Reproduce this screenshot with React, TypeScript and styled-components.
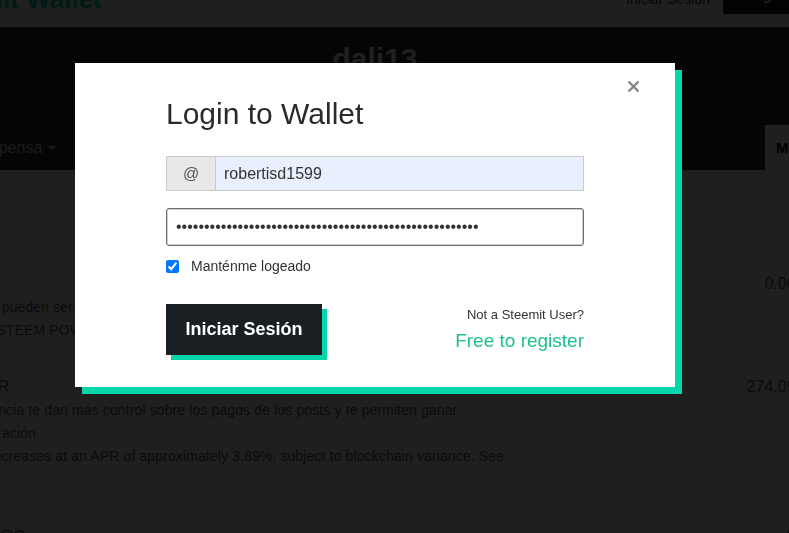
import React, { useEffect, useRef } from "react";
import styled, { createGlobalStyle } from "styled-components";

const GlobalStyle = createGlobalStyle`
  html, body { margin: 0; padding: 0; overflow: hidden; background: #fff; }
  body { font-family: "Liberation Sans", Arial, sans-serif; }
  *, *::before, *::after { box-sizing: border-box; }
`;

const Viewport = styled.div`
  width: 789px;
  height: 533px;
  overflow: hidden;
`;

/* the underlying page, scrolled 23px down and 120px right */
const Stage = styled.div`
  width: 990px;
  margin-left: -120px;
  margin-top: -23px;
  background: #fff;
`;

const Header = styled.header`
  height: 50px;
  padding: 0 26px 7px 45px;
  display: flex;
  align-items: center;
  justify-content: space-between;
  background: #fff;
`;

const Logo = styled.div`
  font-size: 26px;
  line-height: 30px;
  font-weight: 700;
  color: #06d6a9;
`;

const HeaderActions = styled.div`
  display: flex;
  align-items: center;
  gap: 13px;
`;

const HeaderLink = styled.span`
  font-size: 14px;
  color: #333;
`;

const HeaderButton = styled.span`
  display: flex;
  align-items: center;
  height: 30px;
  padding: 0 22px 7px;
  background: #1a1e22;
  color: #fff;
  font-size: 14px;
  font-weight: 700;
`;

const Hero = styled.section`
  height: 98px;
  padding-top: 14px;
  background: #2b2b2b;
  text-align: center;
`;

const UserName = styled.h2`
  margin: 0;
  font-size: 30px;
  line-height: 36px;
  font-weight: 700;
  color: #fff;
`;

const Nav = styled.nav`
  height: 45px;
  display: flex;
  align-items: stretch;
  padding-left: 68px;
  background: #2b2b2b;
`;

const NavItem = styled.span`
  display: flex;
  align-items: center;
  gap: 6px;
  font-size: 16px;
  color: #d6d6d6;
`;

const Caret = styled.span`
  width: 0;
  height: 0;
  border-left: 4px solid transparent;
  border-right: 4px solid transparent;
  border-top: 4px solid #d6d6d6;
`;

const NavTab = styled.span`
  margin-left: auto;
  width: 105px;
  display: flex;
  align-items: center;
  padding-left: 11px;
  background: #fff;
  color: #000;
  font-weight: 700;
  font-size: 15px;
`;

const Body = styled.main`
  padding: 101px 6px 0 0;
  background: #fff;
  color: #5a5a5a;
`;

const Row = styled.div<{ $divider?: boolean; $gap?: number }>`
  display: grid;
  grid-template-columns: 1fr auto;
  margin-top: ${(p) => p.$gap ?? 0}px;
  padding-bottom: ${(p) => (p.$divider ? 37 : 0)}px;
  border-bottom: ${(p) => (p.$divider ? "1px solid #e4e4e4" : "none")};
`;

const RowTitle = styled.div`
  font-size: 17.3px;
  line-height: 25px;
`;

const RowDesc = styled.div`
  font-size: 14px;
  line-height: 23px;
  letter-spacing: 0.12px;
  white-space: nowrap;
`;

const RowValue = styled.div`
  font-size: 16px;
  line-height: 25px;
  text-align: right;
`;

const Overlay = styled.div`
  position: fixed;
  inset: 0;
  background: rgba(0, 0, 0, 0.878);
  display: flex;
  align-items: flex-start;
  padding: 63px 0 0 75px;
`;

const Modal = styled.div`
  position: relative;
  width: 600px;
  padding: 34px 91px 32px;
  background: #fff;
  box-shadow: 7px 7px 0 #06d6a9;
  color: #333;
`;

const CloseButton = styled.button`
  position: absolute;
  top: 17px;
  right: 35px;
  width: 13px;
  height: 13px;
  padding: 0;
  border: none;
  background: transparent;
  display: flex;
`;

const Title = styled.h1`
  margin: 0 0 25px;
  font-size: 30px;
  line-height: 34px;
  font-weight: 400;
  color: #2a2a2a;
`;

const InputGroup = styled.div`
  display: flex;
  height: 35px;
`;

const Addon = styled.span`
  width: 49px;
  display: flex;
  align-items: center;
  justify-content: center;
  background: #e8e8e8;
  border: 1px solid #cacaca;
  border-right: none;
  font-size: 16px;
  color: #555;
`;

const TextInput = styled.input`
  flex: 1;
  min-width: 0;
  height: 100%;
  padding: 0 8px;
  border: 1px solid #cacaca;
  background: #e8f0fe;
  font: 16px "Liberation Sans", Arial, sans-serif;
  color: #333;
  outline: none;
`;

const PasswordInput = styled.input`
  display: block;
  width: 100%;
  height: 38px;
  margin-top: 17px;
  padding: 0 9px;
  border: 1px solid #6e6e6e;
  border-radius: 3px;
  box-shadow: inset 0 0 0 1px #d0d0d0;
  background: #fff;
  font: 16px "Liberation Sans", Arial, sans-serif;
  color: #333;
  outline: none;
  caret-color: #000;
`;

const CheckRow = styled.label`
  margin-top: 10px;
  height: 20px;
  display: flex;
  align-items: center;
  gap: 12px;
  font-size: 14px;
  color: #333;
`;

const Checkbox = styled.input`
  margin: 0;
  width: 13px;
  height: 13px;
`;

const Footer = styled.div`
  margin-top: 28px;
  display: flex;
  justify-content: space-between;
  align-items: flex-start;
`;

const SubmitButton = styled.button`
  width: 156px;
  height: 51px;
  border: none;
  background: #1a1f24;
  box-shadow: 5px 5px 0 #06d6a9;
  color: #fff;
  font: 700 18px "Liberation Sans", Arial, sans-serif;
  padding: 0;
`;

const Register = styled.div`
  text-align: right;
  padding-top: 3px;
`;

const RegisterHint = styled.div`
  font-size: 13px;
  line-height: 16px;
  color: #333;
`;

const RegisterLink = styled.a`
  display: block;
  margin-top: 7px;
  font-size: 19px;
  line-height: 22px;
  color: #1fbf8f;
  text-decoration: none;
`;

const PASSWORD = "P5Kx9mQw2Lr8ZtYb4HnVc7JdS3FgAe6UpNo1WiRkMy0TqXs5BvCuhL";

export default function App() {
  const pwRef = useRef<HTMLInputElement>(null);

  useEffect(() => {
    const el = pwRef.current;
    if (el) {
      el.focus();
      el.setSelectionRange(el.value.length, el.value.length);
    }
  }, []);

  return (
    <>
      <GlobalStyle />
      <Viewport>
        <Stage>
          <Header>
            <Logo>Steemit Wallet</Logo>
            <HeaderActions>
              <HeaderLink>Iniciar Sesión</HeaderLink>
              <HeaderButton>Registrarse</HeaderButton>
            </HeaderActions>
          </Header>
          <Hero>
            <UserName>dali13</UserName>
          </Hero>
          <Nav>
            <NavItem>
              Recompensa <Caret />
            </NavItem>
            <NavTab>Monedero</NavTab>
          </Nav>
          <Body>
            <Row>
              <div>
                <RowTitle>STEEM</RowTitle>
                <RowDesc>
                  Tokens de STEEM pueden ser transferidos a cualquier lugar en cualquier momento.
                  <br />
                  Se puede pasar a STEEM POWER en un proceso llamado power up.
                </RowDesc>
              </div>
              <RowValue>0.000 STEEM</RowValue>
            </Row>
            <Row $gap={32} $divider>
              <div>
                <RowTitle>STEEM POWER</RowTitle>
                <RowDesc>
                  Unidades de influencia te dan más control sobre los pagos de los posts y te permiten ganar
                  <br />
                  recompensa de curación
                  <br />
                  STEEM POWER increases at an APR of approximately 3.89%, subject to blockchain variance. See
                </RowDesc>
              </div>
              <RowValue>274.093 STEEM</RowValue>
            </Row>
            <Row $gap={18}>
              <div>
                <RowTitle>STEEM DOLLARS</RowTitle>
              </div>
              <RowValue>0.000 SBD</RowValue>
            </Row>
          </Body>
        </Stage>
      </Viewport>

      <Overlay>
        <Modal>
          <CloseButton aria-label="Cerrar">
            <svg width="13" height="13" viewBox="0 0 13 13">
              <path d="M1.5 1.5 L11.5 11.5 M11.5 1.5 L1.5 11.5" stroke="#858585" strokeWidth="2.4" strokeLinecap="butt" />
            </svg>
          </CloseButton>
          <Title>Login to Wallet</Title>
          <InputGroup>
            <Addon>@</Addon>
            <TextInput type="text" defaultValue="robertisd1599" />
          </InputGroup>
          <PasswordInput ref={pwRef} type="password" defaultValue={PASSWORD} />
          <CheckRow>
            <Checkbox type="checkbox" defaultChecked />
            Manténme logeado
          </CheckRow>
          <Footer>
            <SubmitButton>Iniciar Sesión</SubmitButton>
            <Register>
              <RegisterHint>Not a Steemit User?</RegisterHint>
              <RegisterLink href="#">Free to register</RegisterLink>
            </Register>
          </Footer>
        </Modal>
      </Overlay>
    </>
  );
}
